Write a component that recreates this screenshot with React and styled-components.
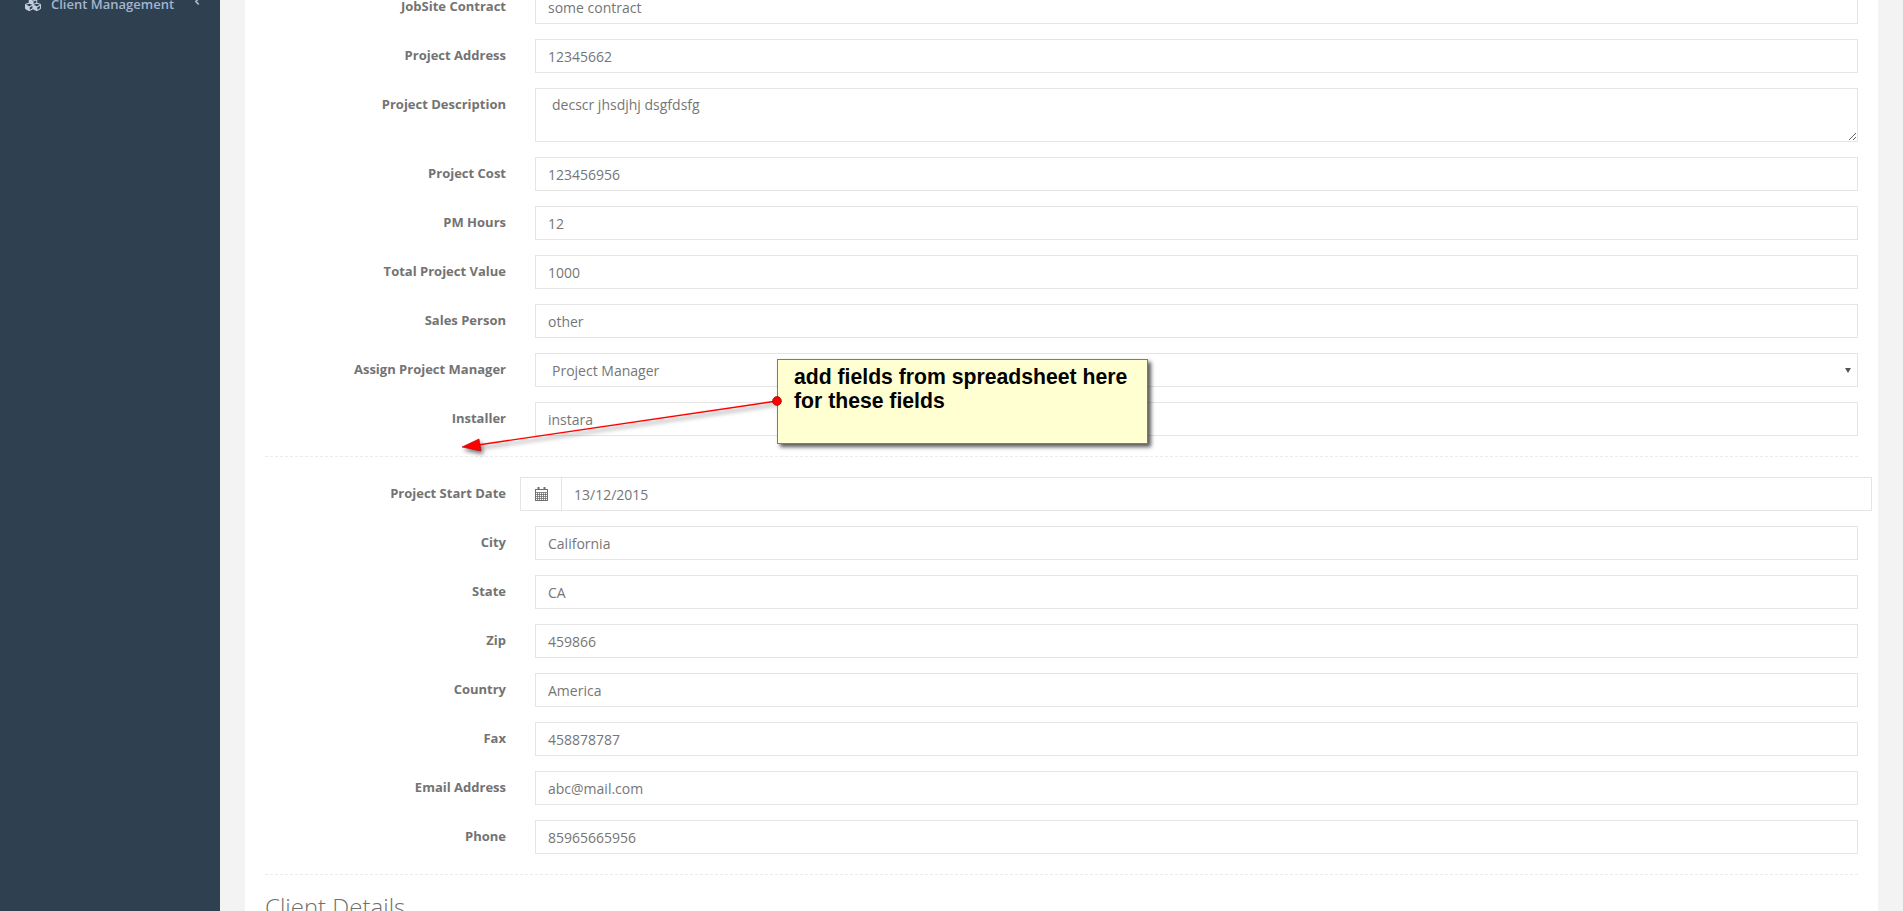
import React from "react";
import styled, { createGlobalStyle } from "styled-components";
import { FaCubes, FaAngleLeft } from "react-icons/fa";

const Global = createGlobalStyle`
  html, body { margin: 0; padding: 0; height: 100%; overflow: hidden; }
  body { font-family: "Open Sans", sans-serif; font-size: 13px; background: #f3f3f3; }
`;

const Page = styled.div`
  position: relative;
  display: flex;
  height: 911px;
  overflow: hidden;
`;

const Sidebar = styled.aside`
  flex: 0 0 220px;
  background: #2f4051;
`;

const NavItem = styled.div`
  display: flex;
  align-items: center;
  height: 30px;
  margin-top: -11px;
  padding-left: 24px;
  color: #a3b5d0;
  font-size: 13px;
  font-weight: 600;
`;

const NavIcon = styled(FaCubes)`
  width: 18px;
  height: 16px;
  margin-right: 9px;
  color: #c3cede;
`;

const NavArrow = styled(FaAngleLeft)`
  width: 8px;
  height: 11px;
  margin-left: 19px;
  margin-top: -6px;
  color: #a3b5d0;
`;

const Main = styled.main`
  flex: 1;
  padding: 0 25px;
  min-width: 0;
`;

const Panel = styled.section`
  background: #fff;
  height: 921px;
  padding: 0 20px;
`;

const FormGroup = styled.div`
  display: flex;
  flex-direction: column;
  gap: 15px;
  margin-top: ${(p) => p.$top || 0}px;
`;

const Row = styled.div`
  display: flex;
  align-items: flex-start;
`;

const Label = styled.label`
  flex: 0 0 241px;
  text-align: right;
  padding-top: 6px;
  line-height: 20px;
  font-weight: 700;
  font-size: 13px;
  color: #737373;
`;

const Control = styled.div`
  flex: 1;
  min-width: 0;
  margin-left: ${(p) => (p.$wide ? 14 : 29)}px;
  margin-right: ${(p) => (p.$wide ? -14 : 0)}px;
`;

const fieldCss = `
  display: block;
  width: 100%;
  box-sizing: border-box;
  height: 34px;
  padding: 6px 12px;
  background: #fff;
  border: 1px solid #e5e5e5;
  border-radius: 0;
  outline: none;
  font-family: "Open Sans", sans-serif;
  font-size: 14px;
  color: #767676;
`;

const Input = styled.input`
  ${fieldCss}
`;

const TextArea = styled.textarea`
  ${fieldCss}
  height: 54px;
  padding-left: 16px;
  line-height: 20px;
  resize: vertical;
`;

const SelectWrap = styled.div`
  position: relative;

  &::after {
    content: "";
    position: absolute;
    right: 7px;
    top: 15px;
    border-left: 3px solid transparent;
    border-right: 3px solid transparent;
    border-top: 5px solid #555;
    pointer-events: none;
  }
`;

const Select = styled.select`
  ${fieldCss}
  appearance: none;
  padding-left: 16px;
`;

const InputGroup = styled.div`
  display: flex;
`;

const Addon = styled.span`
  flex: 0 0 41px;
  box-sizing: border-box;
  height: 34px;
  padding-bottom: 1px;
  display: flex;
  align-items: center;
  justify-content: center;
  border: 1px solid #e5e5e5;
  border-right: 0;
  color: #6f6f6f;
`;

const Divider = styled.hr`
  border: 0;
  border-top: 1px dashed #e7ecf1;
  margin: 20px 0;
`;

const SectionTitle = styled.h3`
  margin: 0;
  font-size: 24px;
  font-weight: 300;
  line-height: 24px;
  color: #6f6f6f;
`;

const Overlay = styled.svg`
  position: absolute;
  left: 0;
  top: 0;
  pointer-events: none;
`;

const Note = styled.div`
  position: absolute;
  left: 777px;
  top: 359px;
  width: 371px;
  height: 85px;
  box-sizing: border-box;
  padding: 5px 16px;
  background: #ffffd2;
  border: 1px solid #7c7c70;
  box-shadow: 3px 3px 4px rgba(0, 0, 0, 0.65);
  font-family: "Liberation Sans", Arial, sans-serif;
  font-weight: 700;
  font-size: 21.2px;
  line-height: 24px;
  color: #000;
`;

const CalendarIcon = () => (
  <svg width="13" height="14" viewBox="0 0 13 14" fill="none" stroke="currentColor" strokeWidth="1">
    <rect x="0.5" y="2.5" width="12" height="11" />
    <path d="M0.5 5.5h12 M0.5 7.5h12 M0.5 9.5h12 M0.5 11.5h12 M2.5 5.5v8 M4.5 5.5v8 M6.5 5.5v8 M8.5 5.5v8 M10.5 5.5v8" strokeWidth="0.8" />
    <path d="M3.5 0v3 M9.5 0v3" strokeWidth="2" />
  </svg>
);

const top = [
  ["JobSite Contract", "some contract"],
  ["Project Address", "12345662"],
  ["Project Description", "decscr jhsdjhj dsgfdsfg", "area"],
  ["Project Cost", "123456956"],
  ["PM Hours", "12"],
  ["Total Project Value", "1000"],
  ["Sales Person", "other"],
  ["Assign Project Manager", "Project Manager", "select"],
  ["Installer", "instara"],
];

const bottom = [
  ["City", "California"],
  ["State", "CA"],
  ["Zip", "459866"],
  ["Country", "America"],
  ["Fax", "458878787"],
  ["Email Address", "abc@mail.com"],
  ["Phone", "85965665956"],
];

const Field = ({ kind, value }) => {
  if (kind === "area") return <TextArea readOnly defaultValue={value} />;
  if (kind === "select")
    return (
      <SelectWrap>
        <Select defaultValue={value}>
          <option>{value}</option>
        </Select>
      </SelectWrap>
    );
  return <Input readOnly defaultValue={value} />;
};

export default function App() {
  return (
    <>
      <Global />
      <Page>
        <Sidebar>
          <NavItem>
            <NavIcon />
            Client Management
            <NavArrow />
          </NavItem>
        </Sidebar>
        <Main>
          <Panel>
            <FormGroup $top={-10}>
              {top.map(([label, value, kind]) => (
                <Row key={label}>
                  <Label>{label}</Label>
                  <Control>
                    <Field kind={kind} value={value} />
                  </Control>
                </Row>
              ))}
            </FormGroup>
            <Divider />
            <FormGroup>
              <Row>
                <Label>Project Start Date</Label>
                <Control $wide>
                  <InputGroup>
                    <Addon>
                      <CalendarIcon />
                    </Addon>
                    <Input readOnly defaultValue="13/12/2015" />
                  </InputGroup>
                </Control>
              </Row>
              {bottom.map(([label, value]) => (
                <Row key={label}>
                  <Label>{label}</Label>
                  <Control>
                    <Field value={value} />
                  </Control>
                </Row>
              ))}
            </FormGroup>
            <Divider />
            <SectionTitle>Client Details</SectionTitle>
          </Panel>
        </Main>
        <Overlay width="1903" height="911" viewBox="0 0 1903 911">
          <defs>
            <filter id="shadow" x="-10%" y="-50%" width="120%" height="200%">
              <feDropShadow dx="2" dy="3" stdDeviation="2" floodColor="#000" floodOpacity="0.55" />
            </filter>
          </defs>
          <g filter="url(#shadow)">
            <line x1="777" y1="401" x2="478" y2="445" stroke="#ff0000" strokeWidth="1.4" />
            <polygon points="462,447 479,439 481,451" fill="#ff0000" stroke="#a00000" strokeWidth="0.6" />
          </g>
        </Overlay>
        <Note>
          add fields from spreadsheet here
          <br />
          for these fields
        </Note>
        <Overlay width="1903" height="911" viewBox="0 0 1903 911">
          <circle cx="777" cy="401" r="4.4" fill="#ff0000" stroke="#900000" strokeWidth="0.7" />
        </Overlay>
      </Page>
    </>
  );
}
